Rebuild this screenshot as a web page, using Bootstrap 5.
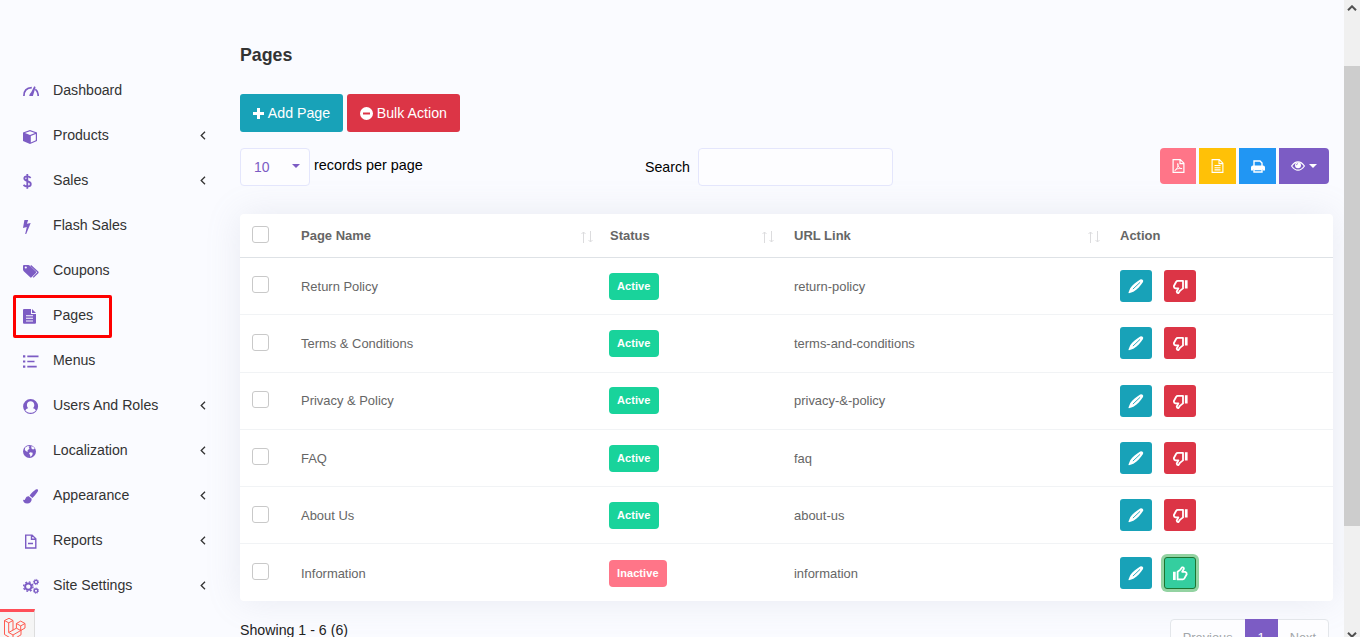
<!DOCTYPE html>
<html lang="en">
<head>
<meta charset="utf-8">
<meta name="viewport" content="width=device-width, initial-scale=1">
<title>Pages</title>
<link href="https://cdn.jsdelivr.net/npm/bootstrap@5.3.0/dist/css/bootstrap.min.css" rel="stylesheet">
<style>
body{font-family:"Liberation Sans",Arial,sans-serif;font-size:14.4px;line-height:20px;background:#fafbff;color:#000;height:637px;overflow:hidden}
.shell{height:637px}
.side{width:240px;padding-top:68px}
.side-link{height:45px;width:206px;padding-left:23px;color:#333;text-decoration:none;font-size:14.15px}
.side-link .ico{width:16px;height:16px;margin-right:14px;margin-top:0;color:#7c5cc4;flex:none}
.side-link .lbl{flex:1;margin-top:-1px}
.chev{width:6px;height:9px;margin-top:-1px;color:#333}
.ico{fill:currentColor;display:block;overflow:visible}
.marker{position:absolute;left:13px;top:2px;width:99px;height:43px;border:3px solid #fe0000;border-radius:2px}
.debug-tab{position:absolute;left:0;top:609px;width:35px;height:34px;background:#f5f5f5;border-top:3px solid #ff4f58;border-right:1px solid #ddd}
.content-area{width:1093px;padding-top:45px}
h1{font-size:17.800px;line-height:20px;font-weight:700;color:#333;margin:0}
.main-btn{height:38px;border-radius:3px;border:0;font-size:14.2px;color:#fff;line-height:20px;padding:0 12.800px}
.bg-teal{background:#18a2b8!important}.bg-red{background:#dc3546!important}
.len-select{width:70px;height:38px;border:1px solid #e4e6fc;border-radius:4px;background:#fdfdff;color:#7c5cc4;font-size:14px;padding:0 9px 0 13px}
.len-caret{border:4px solid transparent;border-top-color:#7c5cc4;border-bottom:0;margin-top:-2px}
.search-box{width:195px;height:38px;border:1px solid #e4e6fc;border-radius:4px;background:#fdfdff;box-shadow:none!important}
.tool{height:36px;width:37px;border:0;border-radius:0;color:#fff;padding:0;display:flex;align-items:center;justify-content:center}
.tool-first{border-radius:4px 0 0 4px}.tool-last{border-radius:0 4px 4px 0}
.table-card{margin-top:28px;height:387px;background:#fff;border-radius:4px;box-shadow:0 0 35px rgba(140,150,175,.16)}
.grid-table{table-layout:fixed;width:1093px;border-collapse:separate;border-spacing:0;font-size:13px;color:#666;--bs-table-bg:transparent}
.grid-table>thead>tr>th{height:44px;padding:0 12px;border-bottom:1px solid #dee2e6;color:#666;vertical-align:middle}
.grid-table>tbody>tr>td{height:57.3px;padding:0 12px;color:#666;vertical-align:middle;border-bottom:1px solid #f1f3f5}
.grid-table>tbody>tr>td.cell-text{padding-top:1px;font-size:12.95px}
.grid-table>tbody>tr:last-child>td{border-bottom:0}
.grid-table .form-check-input{width:17px;height:17px;border:1px solid #c9c9c9;border-radius:3px;margin:0 0 2.4px;display:block}
.sorter{margin:2px -5px 0 0}
.state{display:inline-block;height:27px;line-height:26px;padding:0 8px;border-radius:4px;font-size:11px;font-weight:700;margin-left:-1px;letter-spacing:.08px}
.on{background:#19d39b}.off{background:#ff7588}
.act{width:32px;height:32px;padding:0;border-radius:3px;border:0;color:#fff;display:flex;align-items:center;justify-content:center}
.act-ok{background:#34ce9f!important;color:#fff!important;border:1px solid #1c7430!important;box-shadow:0 0 0 3px #93d3a2}
.page-group .page-link{height:38px;font-size:12.800px;line-height:20px;padding:8px 12px;background:#fdfdff;border-color:#e3e6ea;color:#a2a6aa;--bs-pagination-border-radius:4px}
.page-group .active .page-link{background:#7c5cc4;border-color:#7c5cc4;color:#fff}
.scroll-track{width:16px;background:#f0f0f0;height:637px;padding-top:8px}
.scroll-thumb{height:460px;background:#cdcdcd;margin-top:55px}
</style>
</head>
<body>
<svg class="d-none" xmlns="http://www.w3.org/2000/svg">
<symbol id="dash" viewBox="0 0 16 16"><path d="M.9 13C.9 7.500 3.800 4.900 8.800 4.700M12.300 6.200c2 1.400 2.900 3.600 2.900 6.800" fill="none" stroke="currentColor" stroke-width="1.700"/><path d="M11.200 3.300 12.600 4 9.900 13H6.200Q6.400 10.800 8.200 9.300z"/></symbol>
<symbol id="cube" viewBox="0 0 16 16"><path fill-rule="evenodd" d="M7 2 14 4.500V13l-7 3-7-3V4.500zM7 3.200 2 5l5 1.900L12 5zM7.800 8v6.500l5-2.200V6.100z"/></symbol>
<symbol id="dollar" viewBox="0 0 16 16"><path d="M7.700 4.800C5.800 3 1.300 2.800 1.300 5.500c0 3.200 6.500 1.900 6.500 5.400 0 3.200-5 3.300-7.300 1.100M4.300 1v14.700" fill="none" stroke="currentColor" stroke-width="1.800"/></symbol>
<symbol id="bolt" viewBox="0 0 16 16"><path d="M1.400 2h3.800L3.900 5.800l3.800-.8L3.200 16H2.200l1.600-7L0 9.900z"/></symbol>
<symbol id="tags" viewBox="0 0 16 16"><path fill-rule="evenodd" d="M0 3q0-1 1-1h4.300q.8 0 1.600.8l6 5.800q.7.7 0 1.400l-4.300 4.300q-.7.7-1.400 0L1 8.400Q0 7.500 0 6.600zM2.800 3.400a1.100 1.100 0 1 0 0 2.200 1.100 1.100 0 0 0 0-2.200z"/><path d="M7.700 2.600 14.600 8.700q.8.7 0 1.400l-4.400 4.300" fill="none" stroke="currentColor" stroke-width="1.300"/></symbol>
<symbol id="file" viewBox="0 0 16 16"><path fill-rule="evenodd" d="M1 1h7v5h5v8.700q0 1-1 1H1q-1 0-1-1V2q0-1 1-1zM9 1l4 4H9zM3 7.200v1h7v-1zm0 2.600v1h7v-1zm0 2.600v1h7v-1z"/></symbol>
<symbol id="list" viewBox="0 0 16 16"><path d="M0 2.300h2.300v2.200H0zM4.300 2.600h11.200v1.600H4.300zM0 7.400h2.300v2.200H0zM4.300 7.700h7.200v1.600H4.300zM0 12.500h2.300v2.200H0zM4.300 12.800h9.400v1.600H4.300z"/></symbol>
<symbol id="user" viewBox="0 0 16 16"><path fill-rule="evenodd" d="M7.600 1a7.500 7.500 0 1 0 0 15 7.500 7.500 0 0 0 0-15zM7.600 3.300c2.100 0 3.700 1.600 3.700 3.800 0 1.400-.5 2.500-1.300 3.200 1.500.2 2.300 1 2.900 2.200-2.600 3.100-8 3.100-10.600 0 .6-1.200 1.400-2 2.900-2.200-.8-.7-1.300-1.800-1.300-3.200 0-2.200 1.600-3.800 3.700-3.800z"/></symbol>
<symbol id="globe" viewBox="0 0 16 16"><circle cx="6.500" cy="8.500" r="6.500"/><path d="M2.200 4.400 4.800 3l1.800.6-.9 1.300 1 .8-2.300 1.500.8 1.300-1.700.1-1.700-1.500zM8.200 3.200l2.200.6 1.300 2-1.700.6-1.500-1zM7 9.200l2.700.6-.3 2.200-1.900 2-.5-2.200-1-1.200z" fill="#fafbff"/></symbol>
<symbol id="brush" viewBox="0 0 16 16"><path d="M13.400 1.300q1.800-.5 1.700 1.200c-.2 1.400-3.600 5.700-5.700 7.400L6.600 7.500C8 5.500 11.800 1.800 13.400 1.300zM5.800 8.300l2.900 2.500c.1 2.800-1.700 4.800-4.500 4.800C1.500 15.600.2 13.900 0 11.500c1.500 1 1.900.4 2.500-1 .7-1.600 1.800-2.400 3.300-2.200z"/></symbol>
<symbol id="doc" viewBox="0 0 16 16"><path d="M2.700 2.100h6.400l3.700 3.600V15H2.700zM8.500 2.100v4.100h4.300M5 10.500h5" fill="none" stroke="currentColor" stroke-width="1.400"/></symbol>
<symbol id="cogs" viewBox="0 0 16 16"><g fill="none" stroke="currentColor"><circle cx="5.300" cy="8.600" r="3.200" stroke-width="2"/><circle cx="5.300" cy="8.600" r="4.700" stroke-width="1.400" stroke-dasharray="1.850 1.840"/><circle cx="13" cy="4" r="1.700" stroke-width="1.300"/><circle cx="13" cy="4" r="2.600" stroke-width="1" stroke-dasharray="1.100 .94"/><circle cx="13" cy="12.700" r="1.700" stroke-width="1.300"/><circle cx="13" cy="12.700" r="2.600" stroke-width="1" stroke-dasharray="1.100 .94"/></g></symbol>
<symbol id="chev" viewBox="0 0 6 9"><path d="M5 .7 1.200 4.500 5 8.300" fill="none" stroke="currentColor" stroke-width="1.300"/></symbol>
<symbol id="sort" viewBox="0 0 14 12"><path d="M3.500 12V1M1.500 3 3.500 1l2 2M10.500 0v11M8.500 9l2 2 2-2" fill="none" stroke="#dcdcde" stroke-width="1"/></symbol>
<symbol id="pencil" viewBox="0 0 16 16"><path d="M12.200 1.500q1.200-.8 2.400.3 1.100 1.100.4 2.200c-2.500 3.800-5.600 7.400-9.600 9.700L1 15.300q-.6-.1-.5-.7l1.700-4.400C4.600 6.700 8.200 4 12.200 1.500z"/><path d="M4.900 11.100 12.100 4.300" stroke="#18a2b8" stroke-width=".9"/></symbol>
<symbol id="down" viewBox="0 0 16 16"><path d="M11 2.800H5.800Q4.700 2.800 4.200 3.800L1.900 8q-.2 1.800 1.500 2.400h3L4.700 13.500q.2 1.800 1.800 1.500L8.200 12.600 11 10.400z" fill="none" stroke="currentColor" stroke-width="1.800" stroke-linejoin="round"/><path d="M12.900 2.200h2.700v8.300h-2.700z"/></symbol>
<symbol id="up" viewBox="0 0 16 16"><use href="#down" width="16" height="16" transform="rotate(180 8.300 8.600)"/></symbol>
<symbol id="pdf" viewBox="0 0 12 14"><path d="M.6.6h7.200l3.600 3.600v9.200H.600zM7.500.6v4h4" fill="none" stroke="currentColor" stroke-width="1.200"/><path d="M5.200 4.500c.9 3-.7 5.500-2.900 7.200.8-1.700 3-2.500 7.300-2.100-2.300.1-4.100-1.500-4.400-5.100z" fill="none" stroke="currentColor" stroke-width=".9"/></symbol>
<symbol id="csv" viewBox="0 0 12 14"><path d="M.6.6h7.200l3.600 3.600v9.200H.600zM7.500.6v4h4M3 6.500h6M3 8.700h6M3 10.900h6" fill="none" stroke="currentColor" stroke-width="1.100"/></symbol>
<symbol id="print" viewBox="0 0 14 13"><path d="M3 6V1h6l2 2v3M3 9.500V12h8V9.500z" fill="none" stroke="currentColor" stroke-width="1.400"/><path d="M2 5.400h10q2 0 2 2v3.200h-2.400V9H2.400v1.600H0V7.400q0-2 2-2z"/></symbol>
<symbol id="eye" viewBox="0 0 14 10"><path d="M.6 5Q3.500.8 7 .8T13.400 5Q10.500 9.200 7 9.200T.6 5z" fill="none" stroke="currentColor" stroke-width="1.200"/><circle cx="7" cy="4.200" r="3"/><path d="M5.400 4.200q0-1.500 1.600-1.600" stroke="#7c5cc4" stroke-width=".7" fill="none"/></symbol>
</svg>

<div class="shell d-flex position-relative">
  <nav class="side flex-shrink-0">
    <a class="side-link d-flex align-items-center" href="#"><svg class="ico"><use href="#dash"/></svg><span class="lbl">Dashboard</span></a>
    <a class="side-link d-flex align-items-center" href="#"><svg class="ico"><use href="#cube"/></svg><span class="lbl">Products</span><svg class="chev"><use href="#chev"/></svg></a>
    <a class="side-link d-flex align-items-center" href="#"><svg class="ico"><use href="#dollar"/></svg><span class="lbl">Sales</span><svg class="chev"><use href="#chev"/></svg></a>
    <a class="side-link d-flex align-items-center" href="#"><svg class="ico"><use href="#bolt"/></svg><span class="lbl">Flash Sales</span></a>
    <a class="side-link d-flex align-items-center" href="#"><svg class="ico"><use href="#tags"/></svg><span class="lbl">Coupons</span></a>
    <a class="side-link d-flex align-items-center position-relative" href="#"><svg class="ico"><use href="#file"/></svg><span class="lbl">Pages</span><span class="marker"></span></a>
    <a class="side-link d-flex align-items-center" href="#"><svg class="ico"><use href="#list"/></svg><span class="lbl">Menus</span></a>
    <a class="side-link d-flex align-items-center" href="#"><svg class="ico"><use href="#user"/></svg><span class="lbl">Users And Roles</span><svg class="chev"><use href="#chev"/></svg></a>
    <a class="side-link d-flex align-items-center" href="#"><svg class="ico"><use href="#globe"/></svg><span class="lbl">Localization</span><svg class="chev"><use href="#chev"/></svg></a>
    <a class="side-link d-flex align-items-center" href="#"><svg class="ico"><use href="#brush"/></svg><span class="lbl">Appearance</span><svg class="chev"><use href="#chev"/></svg></a>
    <a class="side-link d-flex align-items-center" href="#"><svg class="ico"><use href="#doc"/></svg><span class="lbl">Reports</span><svg class="chev"><use href="#chev"/></svg></a>
    <a class="side-link d-flex align-items-center" href="#"><svg class="ico"><use href="#cogs"/></svg><span class="lbl">Site Settings</span><svg class="chev"><use href="#chev"/></svg></a>
  </nav>

  <main class="content-area flex-shrink-0">
    <h1>Pages</h1>
    <div class="d-flex gap-1" style="margin-top:29px">
      <button class="btn main-btn bg-teal d-flex align-items-center"><svg class="ico me-1" width="11" height="11" viewBox="0 0 11 11"><path d="M4 0h3v4h4v3H7v4H4V7H0V4h4z"/></svg>Add Page</button>
      <button class="btn main-btn bg-red d-flex align-items-center"><svg class="ico me-1" width="13" height="13" viewBox="0 0 13 13"><path fill-rule="evenodd" d="M6.500 0a6.500 6.500 0 1 0 0 13 6.500 6.500 0 0 0 0-13zM3 5.500h7v2H3z"/></svg>Bulk Action</button>
    </div>
    <div class="d-flex mt-3" style="height:38px">
      <div class="len-select d-flex align-items-center justify-content-between">10<span class="len-caret"></span></div>
      <span style="margin:7px 0 0 4px;width:331px">records per page</span>
      <label class="d-flex align-items-center"><span style="width:53px;font-size:14.2px">Search</span><input class="form-control search-box" type="search" aria-label="Search"></label>
      <div class="d-flex ms-auto me-1" style="gap:3px">
        <button class="btn tool tool-first" style="width:36px;background:#ff7588"><svg class="ico" width="13" height="14"><use href="#pdf"/></svg></button>
        <button class="btn tool" style="background:#ffc107"><svg class="ico" width="13" height="14"><use href="#csv"/></svg></button>
        <button class="btn tool" style="background:#2196f3"><svg class="ico" width="14" height="13"><use href="#print"/></svg></button>
        <button class="btn tool tool-last dropdown-toggle" style="width:50px;background:#7c5cc4"><svg class="ico" width="14" height="10"><use href="#eye"/></svg></button>
      </div>
    </div>

    <div class="table-card">
      <table class="table grid-table mb-0">
        <colgroup><col style="width:49px"><col style="width:309px"><col style="width:184px"><col style="width:326px"><col></colgroup>
        <thead><tr>
          <th><input class="form-check-input" type="checkbox" aria-label="Select all"></th>
          <th><div class="d-flex justify-content-between align-items-center">Page Name<svg class="sorter" style="margin-right:-8px" width="14" height="12"><use href="#sort"/></svg></div></th>
          <th><div class="d-flex justify-content-between align-items-center">Status<svg class="sorter" width="14" height="12"><use href="#sort"/></svg></div></th>
          <th><div class="d-flex justify-content-between align-items-center">URL Link<svg class="sorter" width="14" height="12"><use href="#sort"/></svg></div></th>
          <th>Action</th>
        </tr></thead>
        <tbody id="rows"></tbody>
      </table>
    </div>

    <div class="d-flex justify-content-between pe-1" style="margin-top:18px">
      <span style="padding-top:1px;color:#222;font-size:14.2px">Showing 1 - 6 (6)</span>
      <ul class="pagination page-group mb-0">
        <li class="page-item"><a class="page-link" href="#">Previous</a></li>
        <li class="page-item active"><a class="page-link" href="#">1</a></li>
        <li class="page-item"><a class="page-link" href="#">Next</a></li>
      </ul>
    </div>
  </main>

  <div class="scroll-track ms-auto">
    <svg class="d-block mx-auto" width="10" height="6" viewBox="0 0 10 6" style="margin-top:-3px"><path d="M1 5.300 5 1.300l4 4" fill="none" stroke="#505050" stroke-width="2"/></svg>
    <div class="scroll-thumb"></div>
    <svg class="d-block mx-auto" width="10" height="6" viewBox="0 0 10 6" style="margin-top:106px"><path d="M1 .7 5 4.700l4-4" fill="none" stroke="#505050" stroke-width="2"/></svg>
  </div>

  <div class="debug-tab"><svg width="24" height="24" viewBox="0 0 24 24" fill="none" stroke="#ff5a4f" stroke-width="1" stroke-linejoin="round" style="margin:5px 0 0 2px;display:block"><path d="M2.500 3.500 7 1.300l4 2.200-4.300 2.300zM2.500 3.500v14L11 22.500l8-4.700v-5M6.700 5.800v9.700L11 18l12-7V6.500l-4.300-2.400-4.300 2.400 4.300 2.400L23 6.500M11 3.500v9.700M14.400 6.500v4.700l4.300 2.300V8.900M6.700 15.500l7.700-4.300M11 18v4.500"/></svg></div>
</div>

<script>
const pages = [
  ['Return Policy', 'return-policy', true],
  ['Terms & Conditions', 'terms-and-conditions', true],
  ['Privacy & Policy', 'privacy-&-policy', true],
  ['FAQ', 'faq', true],
  ['About Us', 'about-us', true],
  ['Information', 'information', false]
];
const esc = s => s.replace(/&/g, '&amp;');
document.getElementById('rows').innerHTML = pages.map(([name, url, active]) => `<tr>
  <td><input class="form-check-input" type="checkbox" aria-label="Select row"></td>
  <td class="cell-text">${esc(name)}</td>
  <td><span class="state text-white ${active ? 'on' : 'off'}">${active ? 'Active' : 'Inactive'}</span></td>
  <td class="cell-text">${esc(url)}</td>
  <td><div class="d-flex" style="gap:12px">
    <button class="btn act bg-teal" aria-label="Edit"><svg class="ico" width="16" height="16"><use href="#pencil"/></svg></button>
    <button class="btn act ${active ? 'bg-red' : 'act-ok'}" aria-label="Toggle"><svg class="ico" width="16" height="16"><use href="#${active ? 'down' : 'up'}"/></svg></button>
  </div></td></tr>`).join('');
</script>
<script src="https://cdn.jsdelivr.net/npm/bootstrap@5.3.0/dist/js/bootstrap.bundle.min.js"></script>
</body>
</html>
